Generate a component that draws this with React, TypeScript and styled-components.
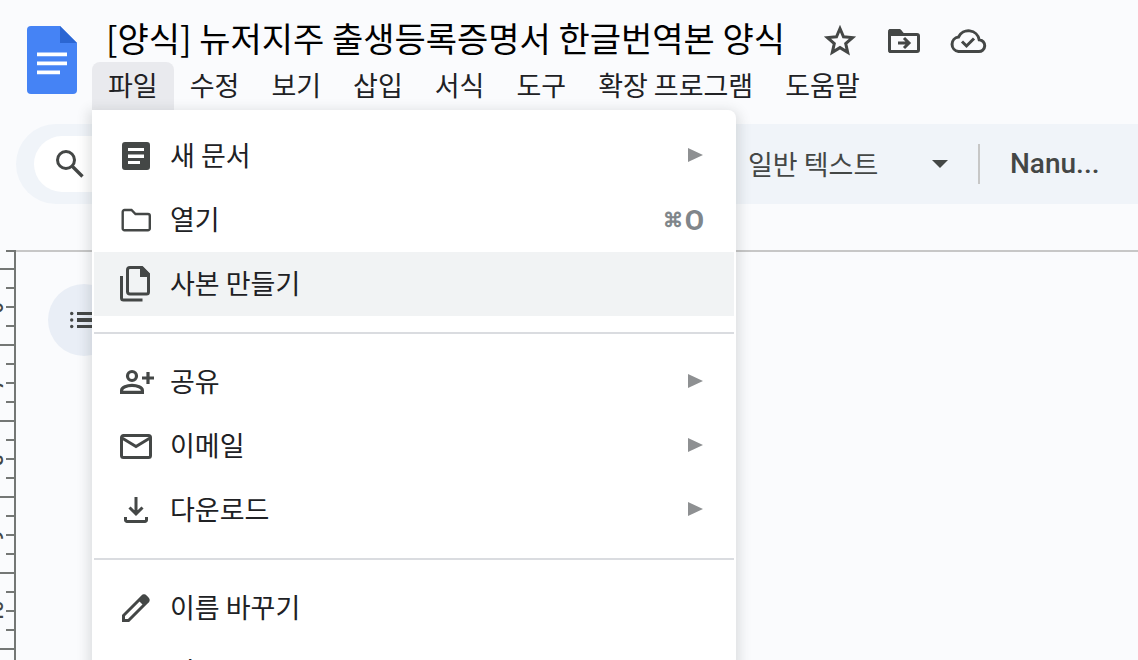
import React from "react";
import styled, { createGlobalStyle } from "styled-components";

const Global = createGlobalStyle`
  * { box-sizing: border-box; }
  body {
    margin: 0;
    background: #fafbfd;
    font-family: "Noto Sans CJK KR", sans-serif;
    color: #202124;
    overflow: hidden;
  }
  button { font: inherit; color: inherit; border: 0; background: none; padding: 0; text-align: left; cursor: pointer; }
  svg { display: block; flex: none; }
`;

const Page = styled.div`
  position: relative;
  height: 100vh;
  display: flex;
  flex-direction: column;
  overflow: hidden;
`;

const Header = styled.header`
  display: flex;
  gap: 14px;
  padding: 16px 0 0 26px;
  height: 110px;
  flex: none;
`;

const LogoLink = styled.a`
  padding-top: 9px;
  width: 52px;
`;

const HeaderBody = styled.div`
  display: flex;
  flex-direction: column;
  min-width: 0;
`;

const TitleRow = styled.div`
  display: flex;
  align-items: center;
  height: 46px;
  padding-left: 14px;
`;

const Title = styled.h1`
  margin: 0 35px 0 0;
  padding-bottom: 2px;
  font-size: 34px;
  font-weight: 400;
  line-height: 44px;
  color: #000;
  white-space: nowrap;
`;

const TitleActions = styled.div`
  display: flex;
  gap: 24px;
  padding-top: 2px;
`;

const IconButton = styled.button`
  width: 40px;
  height: 40px;
  display: flex;
  align-items: center;
  justify-content: center;
`;

const MenuBar = styled.nav`
  display: flex;
`;

const MenuBarItem = styled.button<{ $open?: boolean }>`
  height: 48px;
  padding: 0 16px 2px;
  font-size: 27px;
  line-height: 46px;
  white-space: nowrap;
  border-radius: 8px 8px 0 0;
  background: ${(p) => (p.$open ? "#e9eaee" : "transparent")};
`;

const Toolbar = styled.div`
  display: flex;
  align-items: center;
  height: 80px;
  flex: none;
  margin: 14px 0 0 16px;
  padding-left: 18px;
  border-radius: 40px 0 0 40px;
  background: #f0f4f9;
  color: #444746;
  font-size: 27px;
`;

const SearchButton = styled.button`
  display: flex;
  align-items: center;
  width: 160px;
  height: 56px;
  padding-left: 16px;
  border-radius: 28px;
  background: #fff;
`;

const StyleButton = styled.button`
  display: flex;
  align-items: center;
  justify-content: space-between;
  width: 200px;
  margin-left: 554px;
  line-height: 40px;
`;

const FontButton = styled.button`
  margin-left: 30px;
  padding-left: 30px;
  height: 40px;
  line-height: 40px;
  border-left: 2px solid #c7c7c7;
  font-family: Roboto, sans-serif;
  font-size: 28px;
  font-weight: 500;
`;

const Workspace = styled.main`
  display: flex;
  flex: 1;
  min-height: 0;
  margin-top: 46px;
`;

const Canvas = styled.section`
  flex: 1;
  border-top: 2px solid #c7c7c7;
  padding: 32px;
`;

const OutlineButton = styled.button`
  display: flex;
  align-items: center;
  justify-content: center;
  width: 72px;
  height: 72px;
  border-radius: 50%;
  background: #e9eef6;
`;

const Menu = styled.div`
  position: absolute;
  top: 110px;
  left: 92px;
  width: 644px;
  padding: 14px 2px;
  border-radius: 0 8px 8px 8px;
  background: #fff;
  box-shadow: 0 4px 12px 4px rgba(60, 64, 67, 0.15);
`;

const MenuItem = styled.button<{ $active?: boolean }>`
  display: flex;
  align-items: center;
  width: 100%;
  height: 64px;
  padding: 0 30px 0 26px;
  font-size: 27px;
  background: ${(p) => (p.$active ? "#f1f3f4" : "transparent")};
`;

const ItemIcon = styled.span`
  width: 50px;
`;

const ItemLabel = styled.span`
  flex: 1;
  padding-bottom: 4px;
`;

const Shortcut = styled.kbd`
  display: flex;
  align-items: center;
  gap: 2px;
  font-family: Roboto, sans-serif;
  font-size: 28px;
  font-weight: 700;
  color: #80868b;
`;

const CommandKey = styled.span`
  font-size: 20px;
`;

const Rule = styled.hr`
  margin: 16px 0;
  border: 0;
  height: 2px;
  background: #dadce0;
`;

const stroke = { fill: "none", stroke: "#444746", strokeWidth: 3 };

const icons = {
  doc: (
    <>
      <path fillRule="evenodd" fill="#444746" d="M5 4h22a3 3 0 0 1 3 3v22a3 3 0 0 1-3 3H5a3 3 0 0 1-3-3V7a3 3 0 0 1 3-3ZM8 10v3h16v-3ZM8 16v4h16v-4ZM8 23v3h12v-3Z" />
      <path fill="#a3a4a4" d="M8 16h16v1H8z" />
    </>
  ),
  folder: <path {...stroke} strokeWidth={2.400} d="M4.500 8h7l4 4H28a1.800 1.800 0 0 1 1.800 1.800V26.500A1.800 1.800 0 0 1 28 28.300H4.500a1.800 1.800 0 0 1-1.800-1.800V9.800A1.800 1.800 0 0 1 4.500 8Z" />,
  copy: (
    <>
      <path {...stroke} d="M10 1.500h12l6.500 6.500v18a2 2 0 0 1-2 2H10a2.500 2.500 0 0 1-2.500-2.500V4A2.500 2.500 0 0 1 10 1.500ZM1.500 10v22a2 2 0 0 0 2 2h19" />
      <path fill="#444746" d="M20 1h3l7 7v3H20z" />
    </>
  ),
  share: (
    <>
      <circle {...stroke} strokeWidth={3.2} cx="12" cy="12" r="4.500" />
      <path {...stroke} strokeWidth={3.2} d="M1.600 28.400v-2c0-3 5.400-5 10.400-5s10.400 2 10.400 5v2ZM22 14h12M28 8v12" />
    </>
  ),
  mail: <path {...stroke} d="M3.500 7.500h25a2 2 0 0 1 2 2v18a2 2 0 0 1-2 2h-25a2 2 0 0 1-2-2v-18a2 2 0 0 1 2-2ZM2 10l14 8.500L30 10" />,
  download: <path {...stroke} d="M16 5v17M9.500 15.500 16 22l6.500-6.500M5.500 25v3a1.500 1.500 0 0 0 1.500 1.500h18a1.500 1.500 0 0 0 1.500-1.500v-3" />,
  pencil: (
    <>
      <path {...stroke} d="M3.500 30.500v-5L22.500 6.500a2 2 0 0 1 3 0L27.500 8.500a2 2 0 0 1 0 3L8.500 30.500Z" />
      <path fill="#444746" d="m18 10 4-4.500q2-1.500 4 0l2.500 2.500q1.500 2 0 4l-4.500 4Z" />
    </>
  ),
  move: <path {...stroke} d="M3 10h9l4 4h13v15H3ZM10 21h10M16 17l4 4-4 4" />,
};

const Arrow = () => (
  <svg width="16" height="18" viewBox="0 0 16 18" aria-hidden="true">
    <path fill="#8e9092" d="M0 1v14l15-7z" />
  </svg>
);

type Entry = { icon: keyof typeof icons; label: string; sub?: boolean; active?: boolean; keys?: string };

const groups: Entry[][] = [
  [
    { icon: "doc", label: "새 문서", sub: true },
    { icon: "folder", label: "열기", keys: "O" },
    { icon: "copy", label: "사본 만들기", active: true },
  ],
  [
    { icon: "share", label: "공유", sub: true },
    { icon: "mail", label: "이메일", sub: true },
    { icon: "download", label: "다운로드", sub: true },
  ],
  [
    { icon: "pencil", label: "이름 바꾸기" },
    { icon: "move", label: "이동" },
  ],
];

const barItems = ["파일", "수정", "보기", "삽입", "서식", "도구", "확장 프로그램", "도움말"];

const rulerLabels = [6, 7, 8, 9, 10];

const Ruler = () => (
  <svg width="16" height="410" viewBox="0 0 16 410" aria-hidden="true">
    <g fill="#747775">
      <rect x="14" width="2" height="410" />
      <rect x="6" width="8" height="2" />
      {Array.from({ length: 21 }, (_, i) => (
        <rect key={i} x={i % 4 ? 6 : 0} y={18 + i * 19} width={i % 4 ? 8 : 14} height="2" />
      ))}
    </g>
    <g fill="#444746" fontFamily="Roboto, sans-serif" fontSize="20" fontWeight="500" textAnchor="middle">
      {rulerLabels.map((n, i) => (
        <text key={n} transform={`translate(3 ${58 + i * 76}) rotate(-90)`}>{n}</text>
      ))}
    </g>
  </svg>
);

export default function App() {
  return (
    <Page>
      <Global />
      <Header>
        <LogoLink href="#" aria-label="Docs">
          <svg width="52" height="70" viewBox="0 0 52 70">
            <path fill="#4583f5" d="M5 1h29l17 17v47a4 4 0 0 1-4 4H5a4 4 0 0 1-4-4V5a4 4 0 0 1 4-4Z" />
            <path fill="#2b66d3" d="M34 1v17h17z" />
            <path fill="#fff" d="M11 27.600h30v3.600H11zM11 36.600h30v3.600H11zM11 45.600h23v3.600H11z" />
          </svg>
        </LogoLink>
        <HeaderBody>
          <TitleRow>
            <Title>[양식] 뉴저지주 출생등록증명서 한글번역본 양식</Title>
            <TitleActions>
              <IconButton aria-label="별표">
                <svg width="40" height="40" viewBox="0 0 40 40">
                  <path {...stroke} d="m20 8.500 3.500 8.300 9 .8-6.800 5.900 2 8.800-7.700-4.700-7.700 4.700 2-8.800-6.800-5.900 9-.8Z" />
                </svg>
              </IconButton>
              <IconButton aria-label="이동">
                <svg width="40" height="40" viewBox="0 0 40 40">
                  <path {...stroke} d="M6 10.500h9.500l3.500 4h14a1.500 1.500 0 0 1 1.500 1.500V30a1.500 1.500 0 0 1-1.500 1.500H6A1.500 1.500 0 0 1 5.500 30V12A1.500 1.500 0 0 1 6 10.500Z" />
                  <path fill="#444746" d="M5 10h12l4 6H5z" />
                  <path {...stroke} d="M14 23h10M20 18l5 5-5 5" />
                </svg>
              </IconButton>
              <IconButton aria-label="문서 상태">
                <svg width="40" height="40" viewBox="0 0 40 40">
                  <path {...stroke} d="M10.500 31.500h20a5.900 5.900 0 0 0 .7-11.800A11 11 0 0 0 10.500 17 7.300 7.300 0 0 0 10.500 31.500Z" />
                  <path {...stroke} d="m14 21.500 4.500 4.500 7.500-7.500" />
                </svg>
              </IconButton>
            </TitleActions>
          </TitleRow>
          <MenuBar>
            {barItems.map((t, i) => (
              <MenuBarItem key={t} $open={i === 0}>{t}</MenuBarItem>
            ))}
          </MenuBar>
        </HeaderBody>
      </Header>
      <Toolbar>
        <SearchButton aria-label="메뉴 검색">
          <svg width="40" height="40" viewBox="0 0 40 40">
            <circle {...stroke} cx="16" cy="16" r="8.500" />
            <path {...stroke} strokeWidth={3.4} d="m22 22 10.500 10.500" />
          </svg>
        </SearchButton>
        <StyleButton>
          일반 텍스트
          <svg width="16" height="8" viewBox="0 0 16 8" aria-hidden="true"><path fill="#444746" d="M0 0h16L8 8z" /></svg>
        </StyleButton>
        <FontButton>Nanu...</FontButton>
      </Toolbar>
      <Workspace>
        <Ruler />
        <Canvas>
          <OutlineButton aria-label="개요 표시">
            <svg width="28" height="20" viewBox="0 0 28 20">
              <path fill="#444746" d="M7 2h21v3H7zM7 8h21v4H7zM7 15h21v3H7z" />
              <g fill="#444746">
                <circle cx="1.700" cy="3.500" r="1.700" />
                <circle cx="1.700" cy="10" r="1.700" />
                <circle cx="1.700" cy="16.500" r="1.700" />
              </g>
            </svg>
          </OutlineButton>
        </Canvas>
      </Workspace>
      <Menu>
        {groups.map((g, gi) => (
          <React.Fragment key={gi}>
            {gi > 0 && <Rule />}
            {g.map((it) => (
              <MenuItem key={it.label} $active={it.active}>
                <ItemIcon>
                  <svg width="36" height="36" viewBox="0 0 36 36" aria-hidden="true">
                    {icons[it.icon]}
                  </svg>
                </ItemIcon>
                <ItemLabel>{it.label}</ItemLabel>
                {it.sub && <Arrow />}
                {it.keys && <Shortcut><CommandKey>⌘</CommandKey>{it.keys}</Shortcut>}
              </MenuItem>
            ))}
          </React.Fragment>
        ))}
      </Menu>
    </Page>
  );
}
